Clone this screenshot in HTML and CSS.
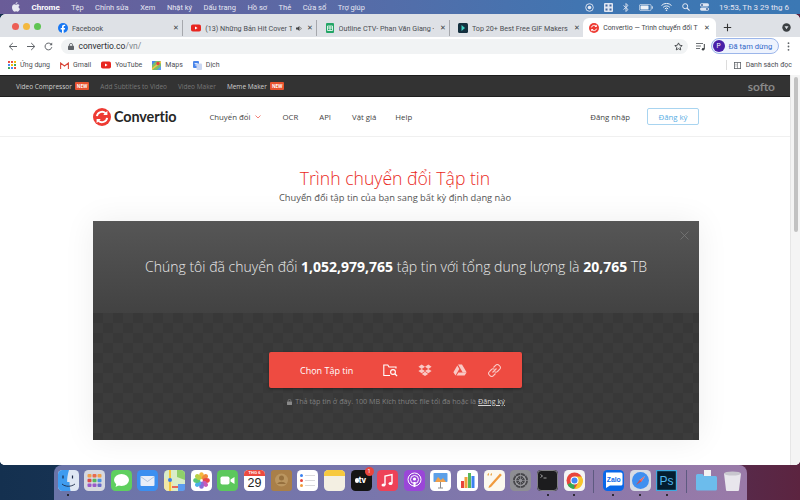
FILE: index.html
```html
<!DOCTYPE html>
<html lang="vi">
<head>
<meta charset="utf-8">
<title>Convertio</title>
<link rel="stylesheet" href="styles.css">
</head>
<body>
<div class="screen">
  <header class="menubar">
    <svg class="apple" width="8" height="10" viewBox="0 0 16 20"><path fill="#e8e8f2" d="M11 0c.2 2-1.700 4.300-3.800 4.100C7 2.200 9 .2 11 0zM8 5.300c1 0 2-.9 3.600-.9 1.300 0 2.700.7 3.600 2-3 1.800-2.500 6 .8 7.300-.8 2.200-2.600 5.600-4.500 5.600-1.200 0-1.800-.8-3.200-.8s-2 .8-3.200.8C2.600 19.300 0 14.600 0 10.900 0 7 2.400 4.500 5 4.500c1.200 0 2.200.8 3 .8z"/></svg>
    <b class="m-app">Chrome</b>
    <span>Tệp</span><span>Chỉnh sửa</span><span>Xem</span><span>Nhật ký</span><span>Dấu trang</span><span>Hồ sơ</span><span>Thẻ</span><span>Cửa sổ</span><span>Trợ giúp</span>
    <div class="m-right">
      <svg width="9" height="9" viewBox="0 0 9 9"><circle cx="4.500" cy="4.500" r="3.800" fill="none" stroke="#e4e9f4" stroke-width=".9"/><circle cx="4.500" cy="4.500" r="1.800" fill="#e4e9f4"/></svg>
      <svg width="9" height="9" viewBox="0 0 9 9"><rect width="9" height="9" rx="1" fill="#dfe6f2"/><path d="M1.500 1.500h2v2h-2zM5.500 1.500h2v2h-2zM1.500 5.500h2v2h-2zM5.500 5.500h2v2h-2z" fill="#44699f"/></svg>
      <svg width="6" height="9" viewBox="0 0 6 9"><path d="M.5 2.500l4.500 4L3 8.500V.5l2 2-4.500 4" fill="none" stroke="#e4e9f4" stroke-width=".9"/></svg>
      <svg width="14" height="7" viewBox="0 0 14 7"><rect x=".4" y=".4" width="11.800" height="6.200" rx="1.500" fill="none" stroke="#dfe6f2" stroke-width=".7"/><rect x="1.500" y="1.500" width="8" height="4" rx=".6" fill="#eef2f8"/><rect x="12.800" y="2.300" width="1" height="2.400" fill="#dfe6f2"/></svg>
      <svg class="m-wifi" width="11" height="8" viewBox="0 0 11 8"><path d="M.5 2.500a7 7 0 0 1 10 0M2.200 4.300a4.600 4.600 0 0 1 6.600 0M3.800 5.900a2.300 2.300 0 0 1 3.400 0" fill="none" stroke="#eef2f8" stroke-width="1"/><circle cx="5.500" cy="7.200" r=".8" fill="#eef2f8"/></svg>
      <svg width="8" height="8" viewBox="0 0 8 8"><circle cx="3.200" cy="3.200" r="2.500" fill="none" stroke="#e4e9f4"/><path d="M5 5l2.600 2.600" stroke="#e4e9f4" stroke-width="1.100"/></svg>
      <svg width="9" height="8" viewBox="0 0 9 8"><rect y=".3" width="9" height="3.200" rx="1.600" fill="#dfe6f2"/><rect y="4.500" width="9" height="3.200" rx="1.600" fill="#dfe6f2"/><circle cx="2" cy="1.900" r="1" fill="#44699f"/><circle cx="7" cy="6.100" r="1" fill="#44699f"/></svg>
      <span class="m-time">19:53, Th 3 29 thg 6</span>
    </div>
  </header>

  <main class="window">
    <div class="tabstrip">
      <div class="lights"><i class="red"></i><i class="yellow"></i><i class="green"></i></div>
      <div class="tab">
        <svg class="fav" width="10" height="10" viewBox="0 0 10 10"><circle cx="5" cy="5" r="5" fill="#1877f2"/><path d="M6.900 6.400l.2-1.500H5.700v-1c0-.4.200-.8.800-.8h.7V1.800S6.600 1.700 6 1.700c-1.200 0-2 .7-2 2v1.200H2.700v1.500H4V10h1.700V6.400z" fill="#fff"/></svg>
        <span class="tab-title">Facebook</span><span class="x">✕</span>
      </div>
      <div class="tab">
        <svg class="fav" width="10" height="10" viewBox="0 0 10 10"><rect y="1.500" width="10" height="7" rx="1.800" fill="#e8251f"/><path d="M4 3.500l2.600 1.500L4 6.500z" fill="#fff"/></svg>
        <span class="tab-title">(13) Những Bản Hit Cover T</span>
        <svg class="spk" width="7" height="7" viewBox="0 0 7 7"><path d="M0 2.500h1.500L3.500 1v5L1.500 4.500H0z" fill="#444"/><path d="M4.500 2.300a1.600 1.600 0 0 1 0 2.400" fill="none" stroke="#444" stroke-width=".7"/></svg>
        <span class="x">✕</span>
      </div>
      <div class="tab">
        <svg class="fav" width="10" height="10" viewBox="0 0 10 10"><rect x="1" width="8" height="10" rx="1" fill="#23a566"/><path d="M2.500 3h5v4.500h-5zM5 3v4.500M2.500 5h5" fill="none" stroke="#fff" stroke-width=".8"/></svg>
        <span class="tab-title">Outline CTV- Phan Văn Giang -</span><span class="x">✕</span>
      </div>
      <div class="tab">
        <svg class="fav" width="10" height="10" viewBox="0 0 10 10"><rect width="10" height="10" rx="1.500" fill="#14303f"/><path d="M3.500 2l3.500 3-3.500 3z" fill="#3fd0c4"/></svg>
        <span class="tab-title">Top 20+ Best Free GIF Makers</span><span class="x">✕</span>
      </div>
      <div class="tab tab-active">
        <svg class="fav" width="10" height="10" viewBox="0 0 10 10"><circle cx="5" cy="5" r="5" fill="#ee3b33"/><path d="M2.400 4.400A2.700 2.700 0 0 1 7 3.200M7.600 5.600A2.700 2.700 0 0 1 3 6.800" fill="none" stroke="#fff" stroke-width="1"/><path d="M7.800 1.600v2.300H5.500zM2.200 8.400V6.100h2.300z" fill="#fff"/></svg>
        <span class="tab-title">Convertio — Trình chuyển đổi T</span><span class="x">✕</span>
      </div>
      <svg class="plus" width="9" height="9" viewBox="0 0 9 9"><path d="M4.500.8v7.400M.8 4.500h7.400" stroke="#333" stroke-width="1.100"/></svg>
      <svg class="strip-ext" width="9" height="9" viewBox="0 0 9 9"><circle cx="4.500" cy="4.500" r="4.200" fill="#3c4043"/><path d="M2.500 3.300h4L4.500 6.300z" fill="#dee1e6"/></svg>
    </div>

    <div class="toolbar">
      <svg width="10" height="9" viewBox="0 0 10 9"><path d="M9 4.500H1.500M4.800 1L1.200 4.500 4.800 8" fill="none" stroke="#5f6368" stroke-width="1"/></svg>
      <svg width="10" height="9" viewBox="0 0 10 9"><path d="M1 4.500h7.500M5.200 1l3.600 3.500L5.200 8" fill="none" stroke="#5f6368" stroke-width="1"/></svg>
      <svg width="9" height="9" viewBox="0 0 9 9"><path d="M7.800 5.200A3.400 3.400 0 1 1 7 2.200" fill="none" stroke="#5f6368" stroke-width="1"/><path d="M8.200.6v2.700H5.500z" fill="#5f6368"/></svg>
      <div class="omnibox">
        <svg width="6" height="7" viewBox="0 0 6 7"><rect y="2.800" width="6" height="4.200" rx=".7" fill="#5f6368"/><path d="M1.400 3V2a1.600 1.600 0 0 1 3.200 0v1" fill="none" stroke="#5f6368" stroke-width=".8"/></svg>
        <span class="url">convertio.co<span class="url-dim">/vn/</span></span>
        <svg class="star" width="9" height="9" viewBox="0 0 9 9"><path d="M4.500.9l1.100 2.300 2.500.4-1.800 1.800.4 2.500-2.200-1.200-2.200 1.200.4-2.500L.9 3.600l2.500-.4z" fill="none" stroke="#3c4043" stroke-width=".9"/></svg>
      </div>
      <svg class="media" width="10" height="9" viewBox="0 0 10 9"><path d="M0 1.500h7M0 4h5M0 6.500h4" stroke="#5f6368" stroke-width=".9"/><path d="M8.300 2v5" stroke="#3c4043" stroke-width="1"/><circle cx="7.100" cy="7.200" r="1.300" fill="#3c4043"/></svg>
      <div class="profile"><span class="avatar">P</span><span class="profile-text">Đã tạm dừng</span></div>
      <svg width="3" height="9" viewBox="0 0 3 9"><circle cx="1.500" cy="1.200" r=".9" fill="#5f6368"/><circle cx="1.500" cy="4.500" r=".9" fill="#5f6368"/><circle cx="1.500" cy="7.800" r=".9" fill="#5f6368"/></svg>
    </div>

    <nav class="bookmarks">
      <svg width="8" height="8" viewBox="0 0 9 9"><g><rect width="2.200" height="2.200" fill="#e8453c"/><rect x="3.400" width="2.200" height="2.200" fill="#e8453c"/><rect x="6.800" width="2.200" height="2.200" fill="#f4b400"/><rect y="3.400" width="2.200" height="2.200" fill="#4285f4"/><rect x="3.400" y="3.400" width="2.200" height="2.200" fill="#f4b400"/><rect x="6.800" y="3.400" width="2.200" height="2.200" fill="#34a853"/><rect y="6.800" width="2.200" height="2.200" fill="#34a853"/><rect x="3.400" y="6.800" width="2.200" height="2.200" fill="#4285f4"/><rect x="6.800" y="6.800" width="2.200" height="2.200" fill="#e8453c"/></g></svg>
      <span class="bm-text">Ứng dụng</span>
      <svg width="9" height="7" viewBox="0 0 9 7"><path d="M.6 7V1l3.900 3L8.400 1v6" fill="none" stroke="#d9483b" stroke-width="1.100"/></svg>
      <span class="bm-text">Gmail</span>
      <svg width="10" height="8" viewBox="0 0 10 8"><rect y=".5" width="10" height="7" rx="1.800" fill="#e8251f"/><path d="M4 2.500L6.600 4 4 5.500z" fill="#fff"/></svg>
      <span class="bm-text">YouTube</span>
      <svg width="9" height="9" viewBox="0 0 9 9"><rect width="9" height="9" rx="1" fill="#7cbf6a"/><path d="M0 9L9 2V0L0 7z" fill="#f4c542"/><path d="M5 9L9 5v4z" fill="#5b9cf2"/><path d="M0 0h4L0 4z" fill="#4a8ae8"/><circle cx="6" cy="2.500" r="1.700" fill="#e8453c"/></svg>
      <span class="bm-text">Maps</span>
      <svg width="9" height="9" viewBox="0 0 9 9"><rect width="6" height="7" rx="1" fill="#4a85ea"/><rect x="3.500" y="2.500" width="5.500" height="6.500" rx="1" fill="#c9d6f2"/><path d="M1.500 2.500h3M3 2v3" stroke="#fff" stroke-width=".7"/></svg>
      <span class="bm-text">Dịch</span>
      <div class="reading">
        <svg width="7" height="7" viewBox="0 0 7 7"><rect x=".4" y=".4" width="6.200" height="6.200" fill="none" stroke="#5f6368" stroke-width=".8"/><path d="M3.500.5v6M1.400 2.300h1.200M1.400 4h1.200" stroke="#5f6368" stroke-width=".6"/></svg>
        <span class="bm-text bm-last">Danh sách đọc</span>
      </div>
    </nav>

    <div class="viewport">
      <div class="page">
        <div class="softo">
          <span class="sf-on">Video Compressor</span><em class="new">NEW</em>
          <span class="sf-dim">Add Subtitles to Video</span>
          <span class="sf-dim">Video Maker</span>
          <span class="sf-on">Meme Maker</span><em class="new">NEW</em>
          <b class="softo-logo">softo</b>
        </div>
        <div class="sitenav">
          <svg class="logo-mark" width="18" height="18" viewBox="0 0 18 18"><circle cx="9" cy="9" r="9" fill="#ee3b33"/><path d="M3.900 8.200A5.200 5.200 0 0 1 12.600 5.200M14.100 9.800A5.200 5.200 0 0 1 5.400 12.800" fill="none" stroke="#fff" stroke-width="1.900"/><path d="M14.400 2.700v4.200h-4.200zM3.600 15.300v-4.200h4.200z" fill="#fff"/></svg>
          <span class="logo-text">Convertio</span>
          <a class="nv nv-first">Chuyển đổi<svg class="chev" width="6" height="4" viewBox="0 0 6 4"><path d="M.5.500L3 3 5.500.5" fill="none" stroke="#ee4a3f" stroke-width=".7"/></svg></a>
          <a class="nv">OCR</a><a class="nv">API</a><a class="nv">Vật giá</a><a class="nv nv-help">Help</a>
          <a class="nv nv-login">Đăng nhập</a>
          <a class="signup">Đăng ký</a>
        </div>
        <section class="hero">
          <h1>Trình chuyển đổi Tập tin</h1>
          <p>Chuyển đổi tập tin của bạn sang bất kỳ định dạng nào</p>
        </section>
        <section class="panel">
          <div class="stats">
            <svg class="close" width="9" height="9" viewBox="0 0 9 9"><path d="M.5.500l8 8M8.500.5l-8 8" stroke="#777" stroke-width=".8"/></svg>
            <p>Chúng tôi đã chuyển đổi <b>1,052,979,765</b> tập tin với tổng dung lượng là <b>20,765</b> TB</p>
          </div>
          <div class="drop">
            <div class="pick">
              <span class="pick-label">Chọn Tập tin</span>
              <svg class="pk pk-1" width="15" height="13" viewBox="0 0 15 13"><path d="M13 4.500V3H6L4.800 1H.8v10.500H7" fill="none" stroke="#fff" stroke-width="1.100"/><circle cx="10" cy="8" r="2.400" fill="none" stroke="#fff" stroke-width="1.100"/><path d="M11.800 9.800l2.300 2.300" stroke="#fff" stroke-width="1.300"/></svg>
              <svg class="pk" width="14" height="12" viewBox="0 0 14 12"><path d="M3.700.5L7 2.700 3.700 4.900.4 2.700zM10.300.5l3.300 2.200-3.300 2.200L7 2.700zM3.700 4.900L7 7.100 3.700 9.300.4 7.100zM10.300 4.900l3.300 2.200-3.300 2.200L7 7.100zM7 7.800l3.200 2.100L7 12 3.800 9.900z" fill="#f9c9c5"/></svg>
              <svg class="pk" width="14" height="12" viewBox="0 0 14 12"><path d="M5 .5h4l4.600 7.800h-4zM4.300 1.600l2 3.500L2.500 11.500.4 8.200zM5.400 8.600h8.200l-2 3H3.500z" fill="#f9c9c5"/></svg>
              <svg class="pk" width="13" height="13" viewBox="0 0 13 13"><path d="M5.500 3.500L7.800 1.200a2 2 0 0 1 3 0l1 1a2 2 0 0 1 0 3L9.500 7.500a2 2 0 0 1-3 0M7.500 9.500l-2.300 2.300a2 2 0 0 1-3 0l-1-1a2 2 0 0 1 0-3l2.300-2.300a2 2 0 0 1 3 0" fill="none" stroke="#f9c9c5" stroke-width="1.100"/><path d="M4.500 8.500l4-4" stroke="#f9c9c5" stroke-width="1.100"/></svg>
            </div>
            <p class="hint"><svg width="5" height="6" viewBox="0 0 5 6"><rect y="2.400" width="5" height="3.600" rx=".5" fill="#8a8a8a"/><path d="M1.100 2.600V1.800a1.400 1.400 0 0 1 2.800 0v.8" fill="none" stroke="#8a8a8a" stroke-width=".7"/></svg>Thả tập tin ở đây. 100 MB Kích thước file tối đa hoặc là <a>Đăng ký</a></p>
          </div>
        </section>
      </div>
      <div class="scrollbar"><div class="thumb"></div></div>
    </div>
  </main>

  <footer class="dock">
    <div class="dk">
      <svg viewBox="0 0 21 21"><rect width="21" height="21" rx="4.500" fill="#dfe7f3"/><path d="M4.500 0H11C9.500 5 9 9 9.200 12H11.500c0 3 .3 6 1 9H4.500A4.500 4.500 0 0 1 0 16.500v-12A4.500 4.500 0 0 1 4.500 0z" fill="#3f9cf0"/><path d="M5 5.500v3M14.500 5.500v3" stroke="#1d2b4a" stroke-width="1.200"/><path d="M4 14c3.500 3 9 3 13 0" fill="none" stroke="#1d2b4a" stroke-width=".9"/></svg>
      <i class="run"></i>
    </div>
    <div class="dk"><svg viewBox="0 0 21 21"><rect width="21" height="21" rx="4.500" fill="#d6d8df"/><g><rect x="3.500" y="4" width="4" height="3.500" rx="1" fill="#f0a04a"/><rect x="8.500" y="4" width="4" height="3.500" rx="1" fill="#e86a4a"/><rect x="13.500" y="4" width="4" height="3.500" rx="1" fill="#f0a04a"/><rect x="3.500" y="8.800" width="4" height="3.500" rx="1" fill="#d84a4a"/><rect x="8.500" y="8.800" width="4" height="3.500" rx="1" fill="#58b85a"/><rect x="13.500" y="8.800" width="4" height="3.500" rx="1" fill="#4a90e0"/><rect x="3.500" y="13.600" width="4" height="3.500" rx="1" fill="#9a5ac8"/><rect x="8.500" y="13.600" width="4" height="3.500" rx="1" fill="#9a5ac8"/><rect x="13.500" y="13.600" width="4" height="3.500" rx="1" fill="#6a6ac8"/></g></svg></div>
    <div class="dk"><svg viewBox="0 0 21 21"><rect width="21" height="21" rx="4.500" fill="#5fcf5f"/><ellipse cx="10.500" cy="10" rx="7.500" ry="6" fill="#fff"/><path d="M5.500 13.500L4.500 17l4-2z" fill="#fff"/></svg></div>
    <div class="dk"><svg viewBox="0 0 21 21"><rect width="21" height="21" rx="4.500" fill="#3b8ff0"/><rect x="3.500" y="6" width="14" height="10" rx="1" fill="#e8eef8"/><path d="M3.500 6.500l7 5 7-5" fill="none" stroke="#9ab0d0" stroke-width=".7"/></svg></div>
    <div class="dk"><svg viewBox="0 0 21 21"><rect width="21" height="21" rx="4.500" fill="#d9ecc8"/><path d="M0 8l9 4 0 9H4.500A4.500 4.500 0 0 1 0 16.500z" fill="#f0e6a8"/><path d="M13 0h3.500A4.500 4.500 0 0 1 21 4.500V10l-8-3z" fill="#8fd06a"/><path d="M6 0v21" stroke="#f6c83c" stroke-width="2"/><path d="M14 14h7v4.500a2.500 2.500 0 0 1-2.500 2.500H14z" fill="#5c9cf0"/><circle cx="6" cy="10" r="2" fill="#3b7fe8"/><path d="M8 17h6" stroke="#e8685a" stroke-width="2"/></svg></div>
    <div class="dk"><svg viewBox="0 0 21 21"><rect width="21" height="21" rx="4.500" fill="#fff"/><g transform="translate(10.500 10.500)"><ellipse cy="-4.800" rx="2.400" ry="3.500" fill="#f6b73c"/><ellipse cy="-4.800" rx="2.400" ry="3.500" fill="#f08a3c" transform="rotate(45)"/><ellipse cy="-4.800" rx="2.400" ry="3.500" fill="#e8484a" transform="rotate(90)"/><ellipse cy="-4.800" rx="2.400" ry="3.500" fill="#c85ab8" transform="rotate(135)"/><ellipse cy="-4.800" rx="2.400" ry="3.500" fill="#8a6ad8" transform="rotate(180)"/><ellipse cy="-4.800" rx="2.400" ry="3.500" fill="#4ab0e8" transform="rotate(225)"/><ellipse cy="-4.800" rx="2.400" ry="3.500" fill="#58c878" transform="rotate(270)"/><ellipse cy="-4.800" rx="2.400" ry="3.500" fill="#b8d048" transform="rotate(315)"/></g></svg></div>
    <div class="dk"><svg viewBox="0 0 21 21"><rect width="21" height="21" rx="4.500" fill="#5cc85c"/><rect x="3.500" y="6.500" width="9" height="8" rx="1.800" fill="#fff"/><path d="M13.500 9.500l4-2.500v7l-4-2.500z" fill="#fff"/></svg></div>
    <div class="dk dk-cal"><span class="cal-top">THG 6</span><span class="cal-day">29</span></div>
    <div class="dk"><svg viewBox="0 0 21 21"><rect width="21" height="21" rx="3" fill="#a97f48"/><circle cx="10.500" cy="10" r="6.500" fill="#bb9660"/><circle cx="10.500" cy="8" r="2.500" fill="#96703e"/><path d="M6 14a5 4 0 0 1 9 0" fill="#96703e"/></svg></div>
    <div class="dk"><svg viewBox="0 0 21 21"><rect width="21" height="21" rx="4.500" fill="#fff"/><circle cx="4.500" cy="5.500" r="1.500" fill="#3b82f0"/><circle cx="4.500" cy="10.500" r="1.500" fill="#e8453c"/><circle cx="4.500" cy="15.500" r="1.500" fill="#f09a3c"/><path d="M8 5.500h10M8 10.500h10M8 15.500h10" stroke="#c8c8cc" stroke-width=".7"/></svg></div>
    <div class="dk"><svg viewBox="0 0 21 21"><rect width="21" height="21" rx="4.500" fill="#f3efe2"/><path d="M0 6V4.500A4.500 4.500 0 0 1 4.500 0h12A4.500 4.500 0 0 1 21 4.500V6z" fill="#f7c93e"/></svg></div>
    <div class="dk dk-tv"><svg viewBox="0 0 21 21"><rect width="21" height="21" rx="4.500" fill="#141414"/></svg><span class="tv-text">tv</span><span class="tv-apple"></span><em class="badge">1</em></div>
    <div class="dk"><svg viewBox="0 0 21 21"><rect width="21" height="21" rx="4.500" fill="#ee4258"/><path d="M8 15V6l7-1.500V13" fill="none" stroke="#fff" stroke-width="1.400"/><ellipse cx="6.500" cy="15" rx="2" ry="1.600" fill="#fff"/><ellipse cx="13.500" cy="13.500" rx="2" ry="1.600" fill="#fff"/></svg></div>
    <div class="dk"><svg viewBox="0 0 21 21"><rect width="21" height="21" rx="4.500" fill="#9a46d8"/><circle cx="10.500" cy="9.500" r="6.500" fill="none" stroke="#fff" stroke-width="1"/><circle cx="10.500" cy="9.500" r="4" fill="none" stroke="#fff" stroke-width="1"/><circle cx="10.500" cy="9" r="1.600" fill="#fff"/><path d="M9.300 12h2.400l-.3 5h-1.800z" fill="#fff"/></svg></div>
    <div class="dk"><svg viewBox="0 0 21 21"><rect width="21" height="21" rx="4.500" fill="#fff"/><rect x="3.500" y="3" width="14" height="9" rx=".8" fill="#5ca0e8"/><path d="M5 12l3-5 3 3 2-2 3 4z" fill="#f0a04a"/><path d="M10.500 12v6M8 18h5" stroke="#8a8a8a" stroke-width="1"/></svg></div>
    <div class="dk"><svg viewBox="0 0 21 21"><rect width="21" height="21" rx="4.500" fill="#fff"/><rect x="4" y="11" width="3" height="7" fill="#e8453c"/><rect x="7.500" y="7" width="3" height="11" fill="#f0a03c"/><rect x="11" y="3" width="3" height="15" fill="#58b85a"/><rect x="14.500" y="6" width="3" height="12" fill="#3b82f0"/></svg></div>
    <div class="dk"><svg viewBox="0 0 21 21"><rect width="21" height="21" rx="4.500" fill="#fbf8ee"/><path d="M5 16L16 3.500l1.800 1.500L7 17l-2.500 1z" fill="#f09a3c"/><path d="M3.500 4.500c.3-.8 1-1.200 1.500-1.200L4.800 5.500h-1.300zM6.500 4.500c.3-.8 1-1.200 1.500-1.200L7.800 5.500H6.500z" fill="#e8a03c"/></svg></div>
    <div class="dk"><svg viewBox="0 0 21 21"><rect width="21" height="21" rx="4.500" fill="#8e8e93"/><circle cx="10.500" cy="10.500" r="7.500" fill="#46464a"/><circle cx="10.500" cy="10.500" r="5" fill="none" stroke="#a0a0a4" stroke-width="1.200"/><circle cx="10.500" cy="10.500" r="1.600" fill="#a0a0a4"/><path d="M10.500 3v15M3 10.500h15M5 5l11 11M16 5L5 16" stroke="#8e8e93" stroke-width=".7"/></svg></div>
    <div class="dk"><svg viewBox="0 0 21 21"><rect width="21" height="21" rx="4" fill="#1c1c1e"/><rect x=".5" y=".5" width="20" height="20" rx="3.600" fill="none" stroke="#9a9a9e" stroke-width=".8"/><path d="M3.500 4.500l2 1.500-2 1.500M6.500 8h3" fill="none" stroke="#d8d8d8" stroke-width=".7"/></svg><i class="run"></i></div>
    <div class="dk"><svg viewBox="0 0 21 21"><rect width="21" height="21" rx="4.500" fill="#f4f4f4"/><circle cx="10.500" cy="10.500" r="8" fill="#e8453c"/><path d="M10.500 10.500L3.500 14.500a8 8 0 0 0 7 4.500z" fill="#34a853"/><path d="M10.500 6.500h7a8 8 0 0 1-7 12.500l3.500-6z" fill="#f8c52c"/><circle cx="10.500" cy="10.500" r="4" fill="#fff"/><circle cx="10.500" cy="10.500" r="3" fill="#4285f4"/></svg><i class="run"></i></div>
    <div class="dock-sep"></div>
    <div class="dk"><svg viewBox="0 0 21 21"><rect width="21" height="21" rx="4.500" fill="#0a68e8"/><path d="M3 2.500h15a1.500 1.500 0 0 1 1.500 1.500v10a1.500 1.500 0 0 1-1.500 1.500H7L3 18V4z" fill="#fff"/><text class="zalo" x="10.800" y="11.500" text-anchor="middle">Zalo</text></svg><i class="run"></i></div>
    <div class="dk"><svg viewBox="0 0 21 21"><rect width="21" height="21" rx="4.500" fill="#d8dce4"/><circle cx="10.500" cy="10.500" r="8.500" fill="#3f8ff0"/><path d="M15 6l-3.500 5.500-2-1.500z" fill="#f4f4f4"/><path d="M15 6L9.500 10l-3.500 5 5.500-3.500z" fill="#e8453c" opacity=".8"/></svg><i class="run"></i></div>
    <div class="dk"><svg viewBox="0 0 21 21"><rect width="21" height="21" fill="#041e2f"/><rect x=".6" y=".6" width="19.800" height="19.800" fill="none" stroke="#3fa8de" stroke-width="1.200"/><text class="ps" x="10.500" y="15" text-anchor="middle">Ps</text></svg><i class="run"></i></div>
    <div class="dock-sep"></div>
    <div class="dk"><svg viewBox="0 0 21 21"><rect x="8" y="0" width="7" height="6" fill="#f2f2f2"/><path d="M0 5.500A1.500 1.500 0 0 1 1.500 4h5l1.500 2h11.500A1.500 1.500 0 0 1 21 7.500V19a1.500 1.500 0 0 1-1.500 1.500h-18A1.500 1.500 0 0 1 0 19z" fill="#6cbcec"/></svg></div>
    <div class="dk"><svg viewBox="0 0 21 21"><path d="M2 3.500h17L17 20a1 1 0 0 1-1 1H5a1 1 0 0 1-1-1z" fill="#e8e6ec"/><ellipse cx="10.500" cy="3.500" rx="8.500" ry="2" fill="#c8c6ce"/></svg></div>
  </footer>
</div>
</body>
</html>
```
FILE: styles.css
```css
* { box-sizing: border-box; }
html, body { margin: 0; padding: 0; }
body { width: 800px; height: 500px; overflow: hidden; font-family: "Roboto", "Liberation Sans", sans-serif; }
.screen { width: 800px; height: 500px; display: flex; flex-direction: column; align-items: center; background: linear-gradient(90deg, #14304f 0%, #1e3a5e 35%, #4a3a66 70%, #5c2440 100%); overflow: hidden; }

.menubar { width: 100%; height: 14px; flex: none; display: flex; align-items: center; gap: 11.500px; padding: 0 11px 0 12px; font-size: 7.500px; color: #e6e6f2; background: linear-gradient(90deg, #6a5c98 0%, #5a6aa6 40%, #3f76b2 75%, #3b78b4 100%); white-space: nowrap; }
.apple { flex: none; }
.m-app { color: #fff; font-weight: 700; font-size: 8px; }
.m-right { margin-left: auto; display: flex; align-items: center; gap: 10px; }
.m-wifi { margin-left: -1.500px; }
.m-time { font-size: 8px; }

.window { width: 100%; height: 451px; flex: none; display: flex; flex-direction: column; background: #fff; border-radius: 6px 6px 5px 5px; overflow: hidden; }
.tabstrip { height: 23px; flex: none; display: flex; align-items: stretch; background: #dee1e6; padding-top: 4px; }
.lights { width: 50px; flex: none; display: flex; gap: 4px; padding: 4.500px 0 0 12px; }
.lights i { width: 7px; height: 7px; border-radius: 50%; }
.red { background: #ec5f56; }
.yellow { background: #f3b83f; }
.green { background: #5fc453; }
.tab { width: 133.300px; flex: none; display: flex; align-items: center; gap: 4px; padding: 0 1px 0 8px; font-size: 7.200px; color: #4a4d52; border-right: 1px solid #a6a8ad; margin: 2px 0 1px; white-space: nowrap; }
.tab:nth-child(5) { border-right: 0; }
.tab-active { background: #fff; margin: 0; padding: 1px 4.500px 0 6px; border: 0; border-radius: 6px 6px 0 0; color: #44474c; font-size: 6.900px; }
.tab-title { flex: 1; min-width: 0; overflow: hidden; }
.fav { flex: none; }
.spk { flex: none; margin-right: -2px; }
.x { flex: none; font-size: 7px; color: #3c4043; width: 10px; text-align: center; }
.plus { margin: 5px 0 0 7px; }
.strip-ext { margin: 5px 0 0 50px; }

.toolbar { height: 18px; flex: none; display: flex; align-items: center; gap: 8px; padding: 0 10px 0 7.500px; background: #fff; }
.omnibox { flex: none; width: 627px; height: 15px; border-radius: 8px; background: #f1f3f4; display: flex; align-items: center; gap: 5px; padding: 0 4.500px 0 7px; }
.url { font-size: 8.500px; color: #2b2e33; }
.url-dim { color: #80868b; }
.star { margin-left: auto; }
.profile { width: 68px; height: 16px; margin-left: -3px; border: 1px solid #9cb6ea; border-radius: 8px; background: #eef3fd; display: flex; align-items: center; gap: 4px; padding-left: 1px; }
.avatar { width: 12px; height: 12px; border-radius: 50%; background: #4a1fa8; color: #fff; font-size: 6.500px; display: flex; align-items: center; justify-content: center; }
.profile-text { font-size: 7.600px; color: #2f66c8; white-space: nowrap; }

.bookmarks { height: 20px; flex: none; display: flex; align-items: center; padding: 0 8px 0 8px; background: #fff; font-size: 7px; color: #4b4e53; }
.bm-text { margin: 0 10px 0 4px; white-space: nowrap; }
.bm-last { margin: 0 8px 0 4px; }
.reading { margin-left: auto; display: flex; align-items: center; gap: 1px; border-left: 1px solid #dcdcdc; padding-left: 7px; height: 10px; margin-right: -8px; }

.viewport { flex: 1; min-height: 0; display: flex; background: #fff; }
.page { width: 790px; flex: none; display: flex; flex-direction: column; align-items: center; font-family: "Open Sans", "Liberation Sans", sans-serif; background: #fff; }
.scrollbar { width: 10px; flex: none; background: #f4f4f4; border-left: 1px solid #e6e6e6; padding: 2px 2px 0 3px; }
.thumb { width: 4px; height: 155px; border-radius: 2px; background: #c2c2c2; }

.softo { width: 100%; height: 22px; flex: none; display: flex; align-items: center; padding: 0 15px 0 16px; background: #333; border-top: 1px solid #1c1c1c; border-bottom: 1px solid #1f1f1f; font-size: 6.500px; white-space: nowrap; }
.sf-on { color: #cfcfcf; }
.sf-dim { color: #777; margin-left: 11px; }
.sf-dim + .sf-on { margin-left: 11px; }
.new { font-style: normal; font-size: 4.500px; font-weight: 700; color: #fff; background: #e8532f; padding: 1px 2px; margin-left: 3px; border-radius: 1px; }
.softo-logo { margin-left: auto; font-family: "Lato", sans-serif; font-size: 12px; font-weight: 700; color: #888; }

.sitenav { width: 100%; height: 40px; flex: none; display: flex; align-items: center; padding: 0 91px 0 93px; background: #fff; border-bottom: 1px solid #f0f0f0; font-size: 7.800px; color: #444; white-space: nowrap; }
.logo-mark { flex: none; }
.logo-text { font-family: "Lato", sans-serif; font-weight: 700; font-size: 14.400px; color: #262626; margin-left: 3px; letter-spacing: -.1px; }
.nv { margin-left: 21px; }
.nv-first { margin-left: 33px; display: flex; align-items: center; gap: 5px; }
.nv-help { margin-left: 19px; }
.chev { flex: none; }
.nv-login { margin-left: auto; }
.signup { width: 52px; height: 17px; margin-left: 17px; border: 1px solid #a8d4f0; border-radius: 2px; color: #58aee4; display: flex; align-items: center; justify-content: center; }

.hero { width: 100%; height: 84px; flex: none; display: flex; flex-direction: column; align-items: center; padding-top: 29px; }
.hero h1 { margin: 0; font-size: 17.600px; line-height: 24px; font-weight: 300; color: #ea2a24; }
.hero p { margin: 0; font-size: 9.300px; line-height: 16px; color: #555; }

.panel { width: 606px; height: 219px; flex: none; margin-left: 2px; display: flex; flex-direction: column; box-shadow: 0 0 30px rgba(0,0,0,.07); }
.stats { height: 92px; flex: none; position: relative; background: linear-gradient(180deg, #565656 0%, #424242 100%); display: flex; justify-content: center; padding-top: 36px; }
.stats p { margin: 0; font-size: 14px; line-height: 20px; font-weight: 300; color: #e8e8e8; white-space: nowrap; }
.stats b { font-weight: 700; color: #fff; }
.close { position: absolute; top: 10px; right: 10px; }
.drop { flex: 1; display: flex; flex-direction: column; align-items: center; padding-top: 39px; background-color: #3a3a3a; background-image: conic-gradient(#3c3c3c 25%, #383838 0 50%, #3c3c3c 0 75%, #383838 0); background-size: 20px 20px; }
.pick { width: 253px; height: 36px; flex: none; margin-right: 1px; display: flex; align-items: center; background: #ee4b41; border-radius: 2px; box-shadow: 0 1px 3px rgba(0,0,0,.4); color: #fff; padding-left: 31px; }
.pick-label { font-size: 9px; width: 88px; white-space: nowrap; }
.pk { flex: none; margin-right: 21px; }
.pk-1 { margin-right: 20px; }
.hint { margin: 8px 0 0; font-size: 7.200px; line-height: 11px; color: #7f7f7f; white-space: nowrap; display: flex; align-items: center; gap: 3px; }
.hint a { color: #d6d6d6; text-decoration: underline; margin-left: -1px; }

.dock { width: 693px; height: 35px; flex: none; display: flex; align-items: flex-start; gap: 5.650px; padding: 5px 4px 0; border-radius: 8px 8px 0 0; background: linear-gradient(90deg, #6a74a8 0%, #7a76ac 50%, #9a7aa8 100%); }
.dk { width: 21px; height: 21px; flex: none; position: relative; }
.dk svg { display: block; width: 21px; height: 21px; }
.run { position: absolute; left: 9.500px; bottom: -5px; width: 2px; height: 2px; border-radius: 50%; background: #111; }
.dock-sep { width: 1px; height: 23px; flex: none; background: #5e5a80; margin: 0 3px; }
.dk-cal { background: #fff; border-radius: 4.500px; overflow: hidden; display: flex; flex-direction: column; align-items: center; font-family: "Liberation Sans", sans-serif; }
.cal-top { width: 100%; height: 6px; background: #ee4a3f; color: #fff; font-size: 4px; line-height: 6px; text-align: center; font-weight: 700; }
.cal-day { font-size: 12.500px; line-height: 14px; color: #222; }
.tv-text { position: absolute; left: 8px; top: 4px; font-size: 9px; line-height: 12px; font-weight: 700; color: #fff; }
.tv-apple { position: absolute; left: 4px; top: 8px; width: 4px; height: 5px; border-radius: 2px; background: #fff; }
.badge { position: absolute; right: -2px; top: -3px; width: 9px; height: 9px; border-radius: 50%; background: #e8453c; color: #fff; font-style: normal; font-size: 5.500px; line-height: 9px; text-align: center; }
.zalo { font-family: "Liberation Sans", sans-serif; font-size: 6.800px; font-weight: 700; fill: #0a68e8; }
.ps { font-family: "Liberation Sans", sans-serif; font-size: 12px; font-weight: 400; fill: #52b8ee; }
```
